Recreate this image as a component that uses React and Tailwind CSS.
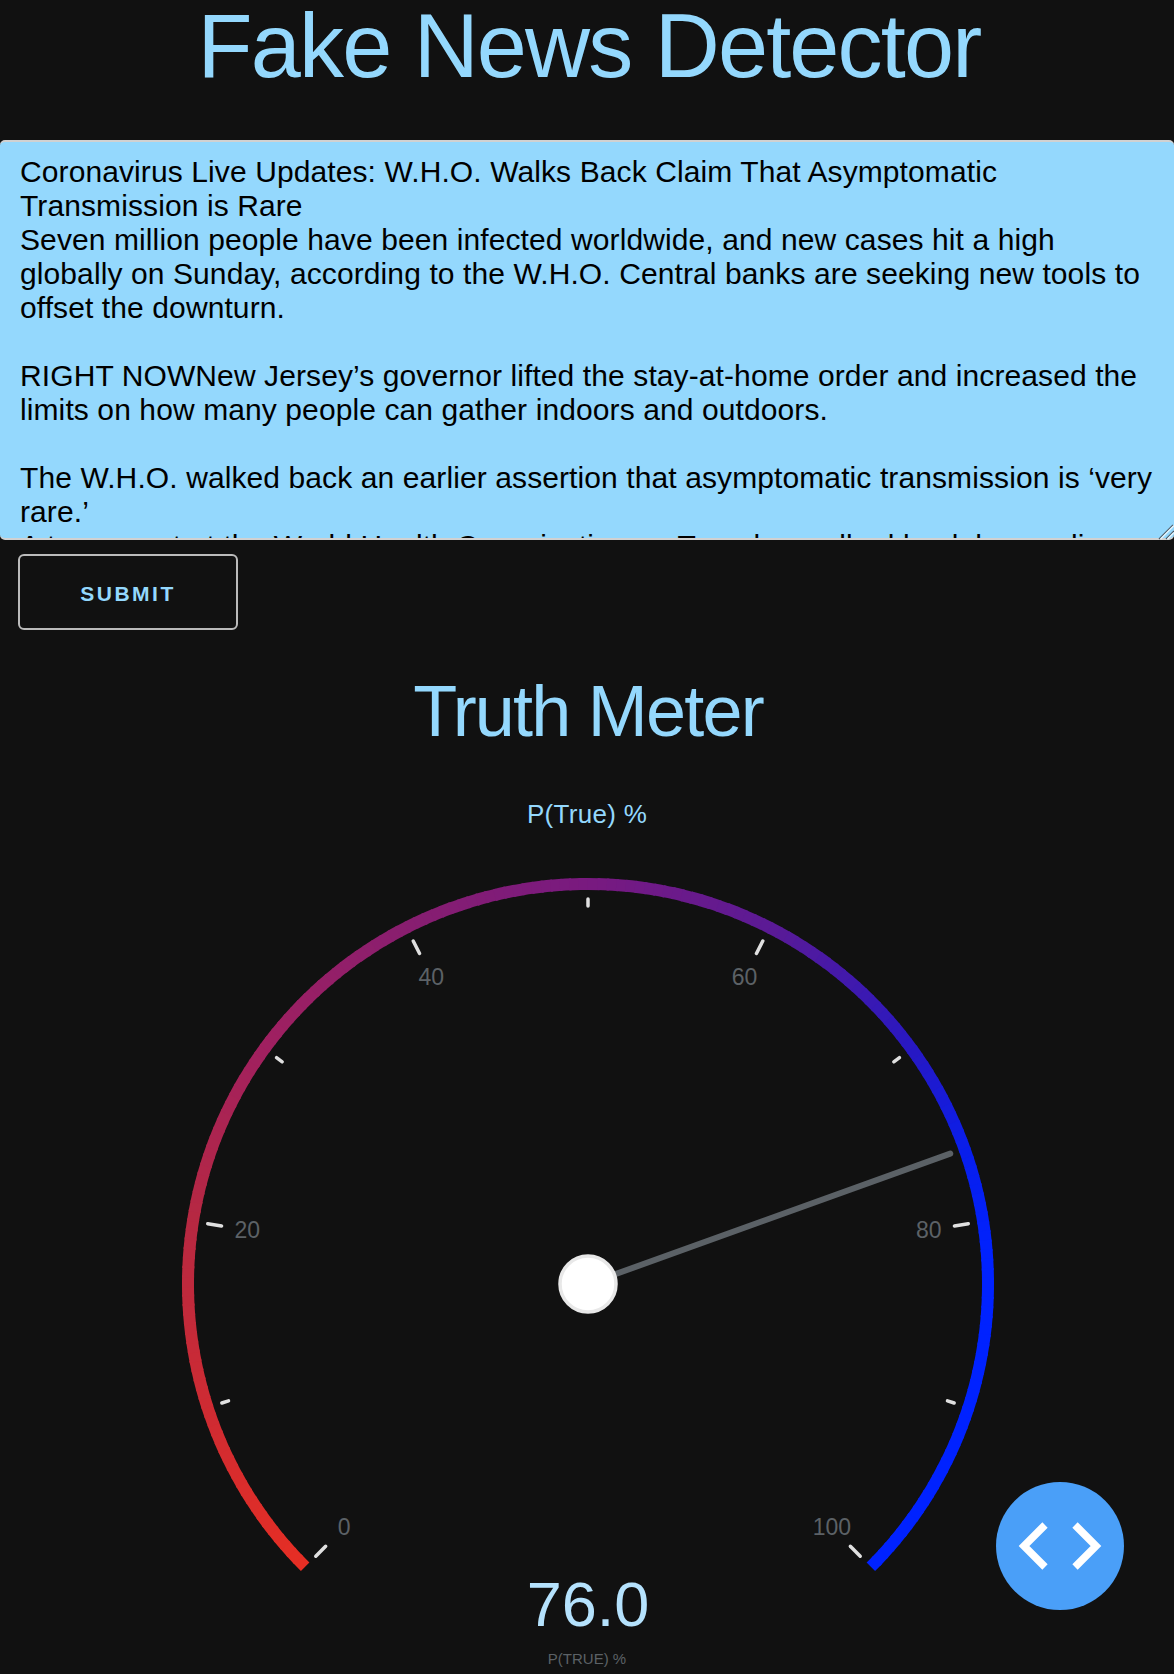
import React from 'react'

const FONT = '"Liberation Sans", Arial, sans-serif'

const ARTICLE = `Coronavirus Live Updates: W.H.O. Walks Back Claim That Asymptomatic Transmission is Rare
Seven million people have been infected worldwide, and new cases hit a high globally on Sunday, according to the W.H.O. Central banks are seeking new tools to offset the downturn.

RIGHT NOWNew Jersey’s governor lifted the stay-at-home order and increased the limits on how many people can gather indoors and outdoors.

The W.H.O. walked back an earlier assertion that asymptomatic transmission is ‘very rare.’
A top expert at the World Health Organization on Tuesday walked back her earlier`

// gauge geometry, in px of the svg box
const CX = 588
const CY = 434
const START = -135
const SWEEP = 270

const COLOR_STOPS = [
  [0, [230, 46, 36]],
  [20, [182, 40, 66]],
  [30, [160, 32, 96]],
  [40, [136, 30, 112]],
  [50, [120, 26, 128]],
  [60, [90, 26, 150]],
  [70, [38, 24, 196]],
  [76, [8, 30, 236]],
  [82, [0, 34, 255]],
  [100, [0, 34, 255]],
]

function colorAt(v) {
  for (let i = 1; i < COLOR_STOPS.length; i++) {
    const [v0, c0] = COLOR_STOPS[i - 1]
    const [v1, c1] = COLOR_STOPS[i]
    if (v <= v1) {
      const t = (v - v0) / (v1 - v0)
      const rgb = c0.map((c, j) => Math.round(c + (c1[j] - c) * t))
      return `rgb(${rgb.join(',')})`
    }
  }
  return 'rgb(0,34,255)'
}

function polar(value, r) {
  const a = ((START + (value / 100) * SWEEP) * Math.PI) / 180
  return [CX + r * Math.sin(a), CY - r * Math.cos(a)]
}

function GaugeArc() {
  const segments = []
  for (let v = 0; v < 100; v += 0.5) {
    const end = Math.min(v + 0.62, 100)
    const [x0, y0] = polar(v, 400)
    const [x1, y1] = polar(end, 400)
    segments.push(
      <path
        key={v}
        d={`M${x0} ${y0} A400 400 0 0 1 ${x1} ${y1}`}
        fill="none"
        stroke={colorAt(v)}
        strokeWidth="12"
      />
    )
  }
  return <g>{segments}</g>
}

function Tick({ value }) {
  const major = value % 20 === 0
  const [x0, y0] = polar(value, major ? 371 : 378)
  const [x1, y1] = polar(value, 385)
  return (
    <line x1={x0} y1={y0} x2={x1} y2={y1} stroke="#e0e0e0" strokeWidth="3.5" strokeLinecap="round" />
  )
}

function Gauge() {
  const ticks = [0, 10, 20, 30, 40, 50, 60, 70, 80, 90, 100]
  const labels = [0, 20, 40, 60, 80, 100]
  const [nx, ny] = polar(76, 385)

  return (
    <svg width="1174" height="722" className="block" style={{ fontFamily: FONT }}>
      <GaugeArc />
      {ticks.map((t) => (
        <Tick key={t} value={t} />
      ))}
      {labels.map((t) => {
        const [x, y] = polar(t, 345)
        return (
          <text key={t} x={x} y={y + (t === 0 || t === 100 ? 7 : 8)} textAnchor="middle" fontSize="23" fill="#5c6166">
            {t}
          </text>
        )
      })}
      <line x1={CX} y1={CY} x2={nx} y2={ny} stroke="#5b6166" strokeWidth="6" strokeLinecap="round" />
      <circle cx={CX} cy={CY} r="28" fill="#ffffff" stroke="#e8e8e8" strokeWidth="3.5" />
    </svg>
  )
}

function ResizeHandle() {
  return (
    <svg width="16" height="16" viewBox="0 0 16 16" className="absolute right-0 bottom-0" fill="none">
      <path d="M1 15 L15 1" stroke="#4a5660" strokeWidth="1.2" />
      <path d="M2.5 15 L16 1.5" stroke="#e4f4fd" strokeWidth="1.4" />
      <path d="M8 15 L16 7" stroke="#4a5660" strokeWidth="1.2" />
      <path d="M9.5 15 L16 8.5" stroke="#e4f4fd" strokeWidth="1.4" />
    </svg>
  )
}

export default function App() {
  return (
    <div className="min-h-[1674px] bg-[#111111] relative overflow-hidden" style={{ fontFamily: FONT }}>
      <h1 className="text-center text-[90px] leading-[92px] tracking-[-1.8px] font-normal text-[#94d8fd] mb-[48px] pl-[4px]">
        Fake News Detector
      </h1>

      <div className="relative">
        <textarea
          readOnly
          defaultValue={ARTICLE}
          className="block w-full h-[400px] overflow-hidden bg-[#94d8fd] text-black text-[30px] tracking-[0.1px] leading-[34px] px-5 pt-[13px] border-y-2 border-x-0 border-[#d1d1d1] rounded-[5px] outline-none resize-none"
          style={{ fontFamily: FONT }}
        />
        <ResizeHandle />
      </div>

      <button className="block ml-[18px] mt-[14px] w-[220px] h-[76px] pt-[3px] border-2 border-[#bbbbbb] rounded-[6px] text-[#94d8fd] text-[21px] font-bold tracking-[2.5px]">
        SUBMIT
      </button>

      <h2 className="text-center text-[72px] leading-[72px] tracking-[-1.8px] font-normal text-[#94d8fd] mt-[45px] pl-[2px]">
        Truth Meter
      </h2>

      <div className="text-center text-[26px] tracking-[0.3px] leading-[30px] text-[#94d8fd] mt-[52px]">P(True) %</div>

      <div className="mt-[21px]">
        <Gauge />
      </div>

      <div className="text-center text-[63px] leading-[62px] text-[#b5e2fd] mt-[1px] pl-[2px]">76.0</div>
      <div className="text-center text-[15px] leading-[20px] text-[#5c6166] mt-[14px]">P(TRUE) %</div>

      <button className="fixed right-[50px] top-[1482px] w-[128px] h-[128px] rounded-full bg-[#4a9ff8] flex items-center justify-center">
        <svg width="84" height="48" viewBox="0 0 84 48" fill="none" stroke="#ffffff" strokeWidth="7.5">
          <path d="M27 3 L6 24 L27 45" />
          <path d="M57 3 L78 24 L57 45" />
        </svg>
      </button>
    </div>
  )
}
